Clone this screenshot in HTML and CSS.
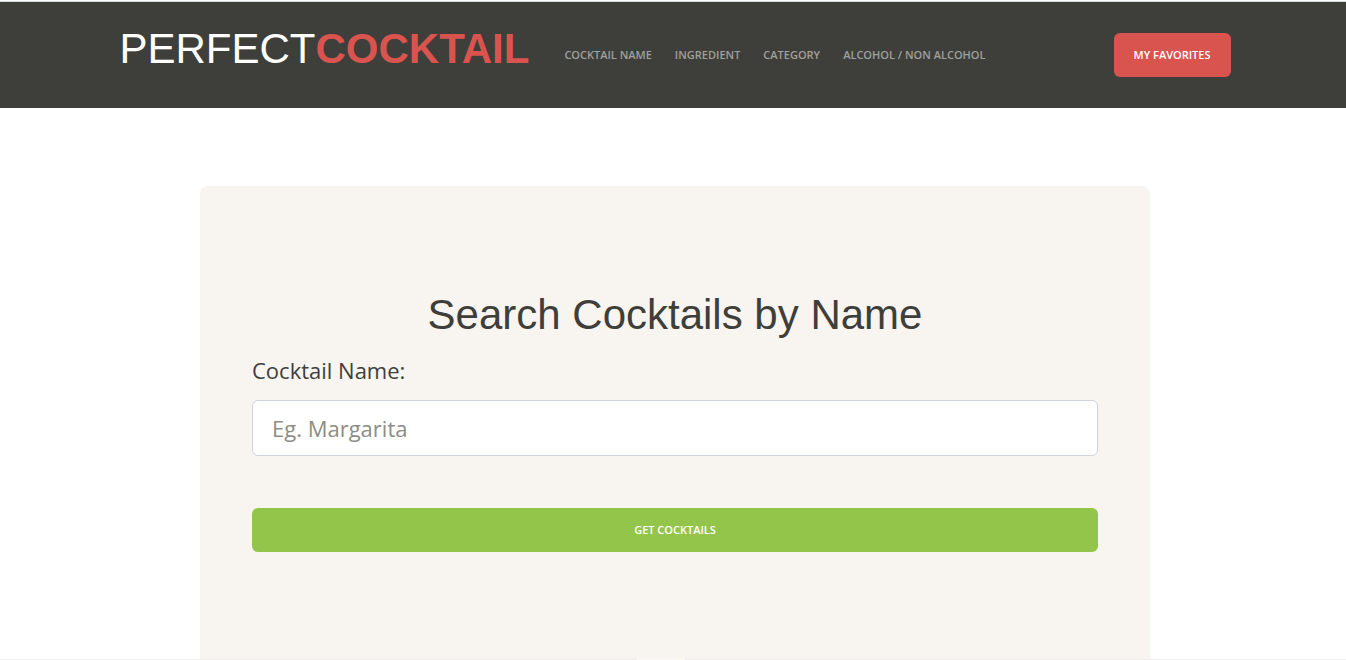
FILE: index.html
```html
<!DOCTYPE html>
<html lang="en">
<head>
<meta charset="utf-8">
<meta name="viewport" content="width=device-width, initial-scale=1">
<title>Perfect Cocktail</title>
<link rel="stylesheet" href="styles.css">
</head>
<body>
<header class="site-header">
  <div class="header-inner">
    <a class="brand" href="#">PERFECT<strong class="brand-accent">COCKTAIL</strong></a>
    <nav class="main-nav">
      <a class="nav-link" href="#">COCKTAIL NAME</a>
      <a class="nav-link" href="#">INGREDIENT</a>
      <a class="nav-link" href="#">CATEGORY</a>
      <a class="nav-link" href="#">ALCOHOL / NON ALCOHOL</a>
    </nav>
    <a class="btn btn-danger" href="#">MY FAVORITES</a>
  </div>
</header>
<main class="page">
  <form class="search-card">
    <h1 class="search-title">Search Cocktails by Name</h1>
    <label class="search-label" for="name">Cocktail Name:</label>
    <input class="search-input" id="name" type="text" placeholder="Eg. Margarita">
    <button class="btn btn-success" type="button">GET COCKTAILS</button>
  </form>
</main>
<footer class="bottom-edge"><span class="bottom-handle"></span></footer>
</body>
</html>
```
FILE: styles.css
```css
* { box-sizing: border-box; }

body {
  margin: 0;
  height: 100vh;
  display: flex;
  flex-direction: column;
  overflow: hidden;
  border-top: 1px solid #fff;
  background: #fff;
  color: #3e3f3a;
  font-family: "Segoe UI", "Open Sans", "Noto Sans", sans-serif;
}

a { text-decoration: none; }

.site-header {
  flex: none;
  padding: 16px 0 16px 4px;
  border-top: 1px solid #d5dadc;
  background: #3e3f3a;
}

.header-inner {
  display: flex;
  align-items: center;
  max-width: 1111px;
  min-height: 74px;
  margin: 0 auto;
}

.brand {
  margin-right: 35px;
  padding-bottom: 12px;
  color: #fff;
  font-family: "Liberation Sans", Arial, sans-serif;
  font-size: 42px;
  line-height: 48px;
}

.brand-accent { color: #d9534f; }

.main-nav {
  display: flex;
  gap: 23px;
  margin-right: auto;
}

.nav-link {
  color: #a0a09c;
  font-size: 11px;
  font-weight: 600;
  line-height: 20px;
}

.btn {
  display: block;
  padding: 12px 20px;
  border: 0;
  border-radius: 6px;
  color: #fff;
  font-family: inherit;
  font-size: 11px;
  font-weight: 600;
  line-height: 20px;
  text-align: center;
}

.btn-danger { background: #d9534f; }

.btn-success {
  width: 100%;
  margin-top: 52px;
  background: #93c54b;
}

.page {
  flex: 1;
  min-height: 0;
  display: flex;
  padding: 78px 0 0 4px;
}

.search-card {
  width: 100%;
  max-width: 950px;
  margin: 0 auto;
  padding: 105px 52px 0;
  border-radius: 8px 8px 0 0;
  background: #f8f5f0;
}

.search-title {
  margin: 0 0 14px;
  font-family: "Liberation Sans", Arial, sans-serif;
  font-size: 42px;
  font-weight: 400;
  line-height: 48px;
  text-align: center;
}

.search-label {
  display: block;
  margin-bottom: 13px;
  font-size: 22px;
  line-height: 34px;
}

.search-input {
  display: block;
  width: 100%;
  height: 56px;
  padding: 10px 19px;
  border: 1px solid #ced4da;
  border-radius: 6px;
  background: #fff;
  color: #3e3f3a;
  font-family: inherit;
  font-size: 22px;
}

.search-input::placeholder { color: #8e8c84; opacity: 1; }

.bottom-edge {
  flex: none;
  display: flex;
  justify-content: center;
  height: 1px;
  background: #ededed;
}

.bottom-handle {
  width: 48px;
  margin-right: 24px;
  background: #faf8f5;
}
```
